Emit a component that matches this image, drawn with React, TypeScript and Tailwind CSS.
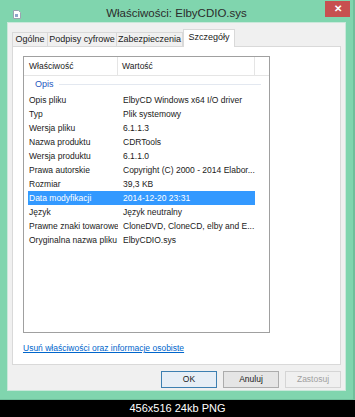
import React from 'react';

const rows: [string, string][] = [
  ['Opis pliku', 'ElbyCD Windows x64 I/O driver'],
  ['Typ', 'Plik systemowy'],
  ['Wersja pliku', '6.1.1.3'],
  ['Nazwa produktu', 'CDRTools'],
  ['Wersja produktu', '6.1.1.0'],
  ['Prawa autorskie', 'Copyright (C) 2000 - 2014 Elabor...'],
  ['Rozmiar', '39,3 KB'],
  ['Data modyfikacji', '2014-12-20 23:31'],
  ['Język', 'Język neutralny'],
  ['Prawne znaki towarowe', 'CloneDVD, CloneCD, elby and E...'],
  ['Oryginalna nazwa pliku', 'ElbyCDIO.sys'],
];

function FileIcon() {
  return (
    <svg width="8" height="9" viewBox="0 0 8 9">
      <path d="M0.5 0.5h5l2 2v6h-7z" fill="#fff" stroke="#9aa4b0" />
      <rect x="2" y="4" width="3" height="3" fill="#8fa6c8" />
    </svg>
  );
}

export default function App() {
  return (
    <div className="w-[355px] h-[417px] bg-black flex flex-col font-['Liberation_Sans',Arial,sans-serif] text-[#1a1a1a]">
      {/* window frame */}
      <div className="h-[400px] bg-[#80d5ae] border-r-2 border-b border-[#6fbf9b] flex flex-col px-[7px] pb-[8px]">
        {/* title bar */}
        <div className="h-[22px] grid grid-cols-[1fr_auto_1fr] items-start">
          <div className="pl-[6px] pt-[10px]">
            <FileIcon />
          </div>
          <div className="pt-[6px] text-[11.5px] text-[#2b2b2b] leading-[14px]">Właściwości: ElbyCDIO.sys</div>
          <div className="flex justify-end pt-[1px] -mr-[4px]">
            <div className="w-[25px] h-[16px] bg-[#c75050] flex items-center justify-center text-white text-[10px] font-bold leading-none">
              ✕
            </div>
          </div>
        </div>

        {/* client area */}
        <div className="flex-1 bg-[#f0f0f0] border border-[#c9e8da] flex flex-col px-[4px]">
          {/* tabs */}
          <div className="flex items-end h-[23px] text-[9px]">
            <div className="w-[36px] h-[14px] border border-b-0 border-[#d9d9d9] bg-[#f0f0f0] leading-[13px] text-center whitespace-nowrap">
              Ogólne
            </div>
            <div className="w-[69px] h-[14px] border border-l-0 border-b-0 border-[#d9d9d9] bg-[#f0f0f0] leading-[13px] text-center whitespace-nowrap">
              Podpisy cyfrowe
            </div>
            <div className="w-[66px] h-[14px] border border-l-0 border-b-0 border-[#d9d9d9] bg-[#f0f0f0] leading-[13px] text-center whitespace-nowrap">
              Zabezpieczenia
            </div>
            <div className="w-[52px] h-[18px] border border-b-0 border-[#d9d9d9] bg-white leading-[14px] text-center -mb-[1px] relative">
              Szczegóły
            </div>
          </div>

          {/* tab page */}
          <div className="h-[319px] bg-white border border-[#d9d9d9] flex flex-col pl-[10px] pt-[9px]">
            <div className="w-[247px] h-[277px] border border-[#a0a0a0] flex flex-col text-[8.5px]">
              {/* header */}
              <div className="h-[19px] flex border-b border-[#e5e5e5] items-center">
                <div className="w-[94px] h-full flex items-center pl-[5px] border-r border-[#e5e5e5]">Właściwość</div>
                <div className="w-[137px] h-full flex items-center pl-[4px] border-r border-[#e5e5e5]">Wartość</div>
              </div>
              {/* group */}
              <div className="h-[17px] flex items-center pl-[11px] pr-[8px] gap-[5px]">
                <span className="text-[#2457c0] text-[9px]">Opis</span>
                <div className="flex-1 h-px bg-[#e3e8f0]" />
              </div>
              {/* rows */}
              <div className="flex flex-col pl-[4px] w-[231px]">
                {rows.map(([k, v]) => {
                  const sel = k === 'Data modyfikacji';
                  return (
                    <div
                      key={k}
                      className={
                        'h-[14px] flex items-center whitespace-nowrap ' +
                        (sel ? 'bg-[#3399ff] text-white' : '')
                      }
                    >
                      <div className="w-[90px] pl-[1px] overflow-hidden">{k}</div>
                      <div className="flex-1 pl-[5px] overflow-hidden">{v}</div>
                    </div>
                  );
                })}
              </div>
            </div>
            <div className="mt-[9px] text-[8.5px] text-[#0066cc] underline leading-[12px]">
              Usuń właściwości oraz informacje osobiste
            </div>
          </div>

          {/* buttons */}
          <div className="flex justify-end gap-[6px] mt-[6px]">
            <div className="w-[56px] h-[17px] border border-[#3c7fb1] bg-[#e6eef6] text-[8.5px] flex items-center justify-center">
              OK
            </div>
            <div className="w-[56px] h-[17px] border border-[#acacac] bg-[#e5e5e5] text-[8.5px] flex items-center justify-center">
              Anuluj
            </div>
            <div className="w-[56px] h-[17px] border border-[#d5d5d5] bg-[#f0f0f0] text-[8.5px] text-[#a0a0a0] flex items-center justify-center">
              Zastosuj
            </div>
          </div>
        </div>
      </div>

      {/* caption */}
      <div className="flex-1 flex items-center justify-center text-white text-[11px]">456x516 24kb PNG</div>
    </div>
  );
}
